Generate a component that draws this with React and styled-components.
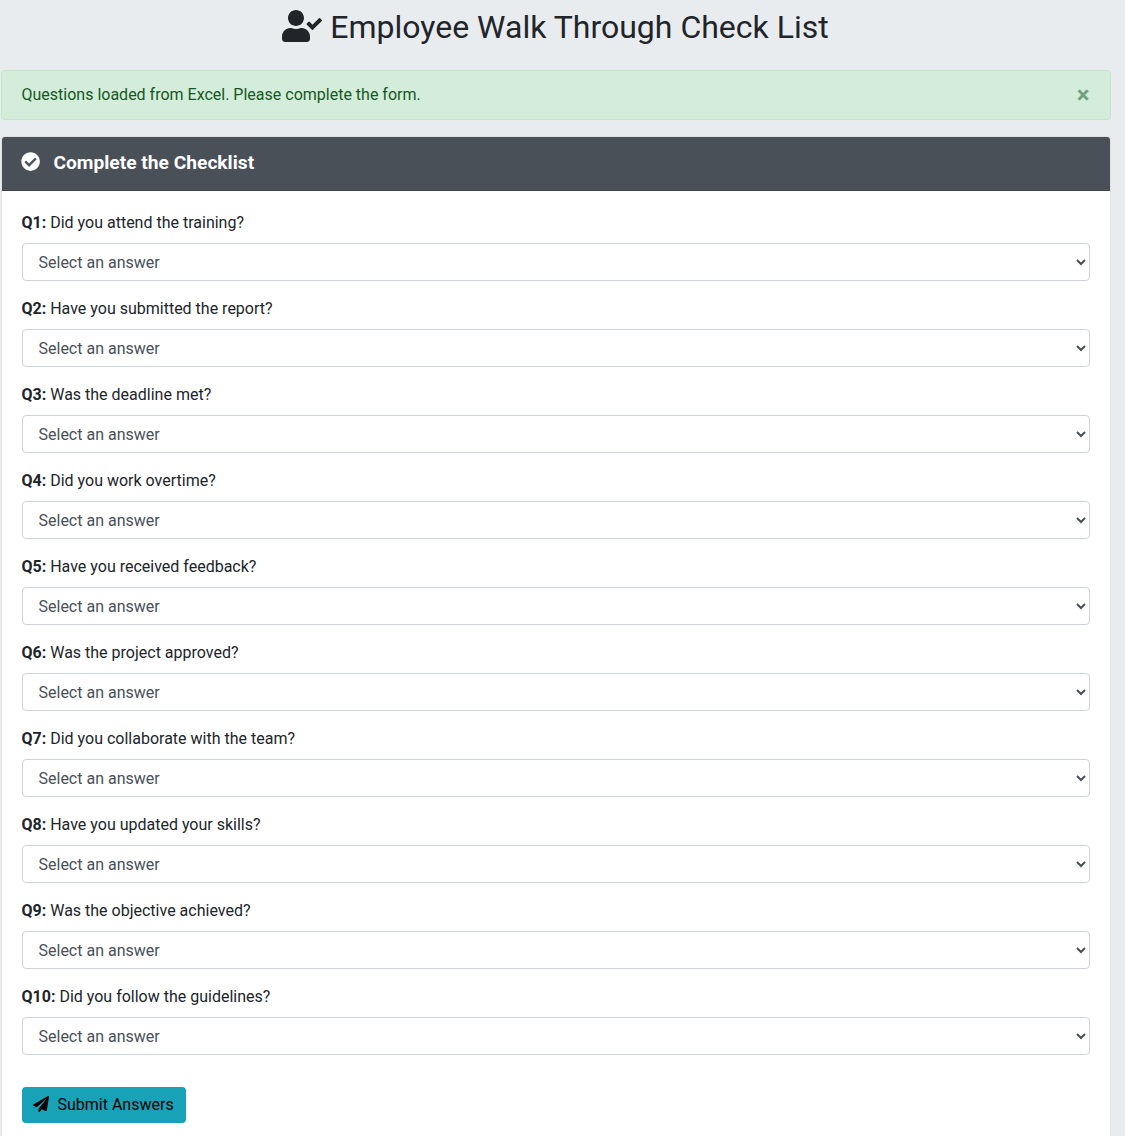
import React from "react";
import styled, { createGlobalStyle } from "styled-components";
import { FaUserCheck, FaCheckCircle, FaPaperPlane } from "react-icons/fa";

const GlobalStyle = createGlobalStyle`
  *, *::before, *::after { box-sizing: border-box; }
  html { overflow: hidden; }
  body {
    margin: 0;
    background: #e9ecef;
    color: #212529;
    font: 400 16px/1.5 Roboto, sans-serif;
  }
`;

const Page = styled.main`
  width: 1110px;
  margin-left: 0.5px;
`;

const Title = styled.h2`
  display: flex;
  align-items: center;
  justify-content: center;
  gap: 8px;
  height: 46px;
  margin: 0 0 24px;
  padding-top: 8px;
  font-size: 32px;
  font-weight: 400;
  line-height: 38px;

  svg {
    margin-bottom: 2px;
  }
`;

const Alert = styled.div`
  display: flex;
  align-items: center;
  justify-content: space-between;
  height: 50px;
  margin-bottom: 16px;
  padding: 0 20px;
  color: #155724;
  background: #d4edda;
  border: 1px solid #c3e6cb;
  border-radius: 4px;
`;

const Close = styled.button`
  padding: 0;
  border: 0;
  background: transparent;
  color: inherit;
  opacity: 0.5;
  font: 700 24px/24px Roboto, sans-serif;
`;

const Card = styled.section`
  background: #fff;
  border: 1px solid rgba(0, 0, 0, 0.125);
  border-radius: 4px;
`;

const CardHeader = styled.header`
  display: flex;
  align-items: center;
  gap: 12.8px;
  height: 54px;
  padding: 0 20px;
  color: #fff;
  background: #495057;
  border-bottom: 1px solid rgba(0, 0, 0, 0.125);
  border-radius: 3px 3px 0 0;
  font-size: 19.2px;
  font-weight: 700;

  svg {
    margin: 0 0.5px 3px -0.5px;
  }
`;

const Form = styled.form`
  padding: 20px;
`;

const Group = styled.div`
  margin-bottom: 16px;
`;

const Label = styled.label`
  display: block;
  margin-bottom: 8px;
`;

const Select = styled.select`
  display: block;
  width: 100%;
  height: 38px;
  padding: 6px 12px;
  color: #495057;
  background: #fff;
  border: 1px solid #ced4da;
  border-radius: 4px;
  font: 400 16px/1.5 Roboto, sans-serif;
`;

const Submit = styled.button`
  display: flex;
  align-items: center;
  gap: 8px;
  height: 36px;
  margin-top: 32px;
  padding: 0 12px;
  color: #000;
  background: #17a2b8;
  border: 0;
  border-radius: 4px;
  font: 400 16px/24px Roboto, sans-serif;

  svg {
    margin: 0 0.5px 2px -0.5px;
  }
`;

const questions = [
  "Did you attend the training?",
  "Have you submitted the report?",
  "Was the deadline met?",
  "Did you work overtime?",
  "Have you received feedback?",
  "Was the project approved?",
  "Did you collaborate with the team?",
  "Have you updated your skills?",
  "Was the objective achieved?",
  "Did you follow the guidelines?",
];

export default function App() {
  return (
    <>
      <GlobalStyle />
      <Page>
        <Title>
          <FaUserCheck size="1.25em" />
          Employee Walk Through Check List
        </Title>
        <Alert>
          Questions loaded from Excel. Please complete the form.
          <Close type="button" aria-label="Close">×</Close>
        </Alert>
        <Card>
          <CardHeader>
            <FaCheckCircle />
            Complete the Checklist
          </CardHeader>
          <Form>
            {questions.map((text, i) => (
              <Group key={text}>
                <Label htmlFor={`q${i + 1}`}>
                  <strong>Q{i + 1}:</strong> {text}
                </Label>
                <Select id={`q${i + 1}`} defaultValue="">
                  <option value="">Select an answer</option>
                  <option>Yes</option>
                  <option>No</option>
                </Select>
              </Group>
            ))}
            <Submit type="button">
              <FaPaperPlane />
              Submit Answers
            </Submit>
          </Form>
        </Card>
      </Page>
    </>
  );
}
